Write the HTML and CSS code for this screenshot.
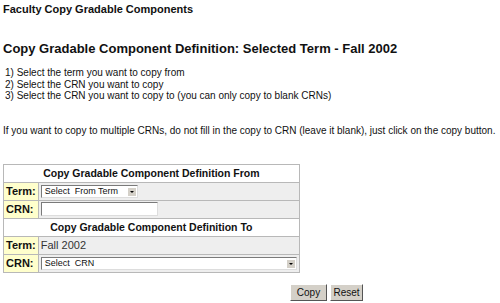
FILE: index.html
```html
<!DOCTYPE html>
<html lang="en">
<head>
    <meta charset="UTF-8">
    <title>Faculty Copy Gradable Components</title>
    <link rel="stylesheet" href="styles.css">
</head>
<body>
    <div class="page-title">Faculty Copy Gradable Components</div>

    <h2 class="section-title">Copy Gradable Component Definition: Selected Term - Fall 2002</h2>

    <div class="steps">
        1) Select the term you want to copy from<br>
        2) Select the CRN you want to copy<br>
        3) Select the CRN you want to copy to (you can only copy to blank CRNs)
    </div>

    <p class="note">If you want to copy to multiple CRNs, do not fill in the copy to CRN (leave it blank), just click on the copy button.</p>

    <table class="copy-table">
        <tr>
            <th colspan="2">Copy Gradable Component Definition From</th>
        </tr>
        <tr>
            <td class="label">Term:</td>
            <td class="field">
                <div class="select select-term">Select&nbsp; From Term<span class="arrow"></span></div>
            </td>
        </tr>
        <tr>
            <td class="label">CRN:</td>
            <td class="field"><div class="text-input"></div></td>
        </tr>
        <tr>
            <th colspan="2">Copy Gradable Component Definition To</th>
        </tr>
        <tr>
            <td class="label">Term:</td>
            <td class="field value">Fall 2002</td>
        </tr>
        <tr>
            <td class="label">CRN:</td>
            <td class="field">
                <div class="select select-crn">Select&nbsp; CRN<span class="arrow"></span></div>
            </td>
        </tr>
    </table>

    <div class="buttons">
        <span class="btn btn-copy">Copy</span>
        <span class="btn btn-reset">Reset</span>
    </div>
</body>
</html>
```

FILE: styles.css
```css
body {
    margin: 0;
    padding: 2px 3px;
    font-family: "Liberation Sans", Arial, sans-serif;
    font-size: 10px;
    color: #111111;
    background: #ffffff;
}
.page-title {
    font-size: 11px;
    font-weight: bold;
    margin-top: 1px;
}
.section-title {
    font-size: 13px;
    font-weight: bold;
    margin: 26px 0 0 0;
}
.steps {
    margin-top: 11px;
    margin-left: 2px;
    line-height: 11.5px;
}
.note {
    margin: 23px 0 0 0;
    line-height: 12px;
}
.copy-table {
    margin-top: 27px;
    width: 294px;
    border-collapse: collapse;
    border: 1px solid #9a9a9a;
    font-size: 11px;
}
.copy-table th,
.copy-table td {
    border: 1px solid #b8b8b8;
    padding: 0 2px;
    height: 17px;
}
.copy-table th {
    background: #ffffff;
    font-weight: bold;
    font-size: 10.5px;
    text-align: center;
}
.label {
    background: #ffffcc;
    font-weight: bold;
    width: 28px;
    white-space: nowrap;
}
.field {
    background: #eeeeee;
}
.value {
    color: #333333;
}
.select {
    position: relative;
    box-sizing: border-box;
    height: 13px;
    border: 1px solid #7a7a7a;
    border-right-color: #dddddd;
    border-bottom-color: #dddddd;
    background: #ffffff;
    font-size: 9px;
    line-height: 11px;
    padding-left: 3px;
}
.select-term {
    width: 97px;
}
.select-crn {
    width: 256px;
}
.arrow {
    position: absolute;
    right: 1px;
    top: 1px;
    width: 9px;
    height: 9px;
    background: #d4d0c8;
    border-top: 1px solid #ffffff;
    border-left: 1px solid #ffffff;
    box-sizing: border-box;
}
.arrow::after {
    content: "";
    position: absolute;
    left: 2px;
    top: 3px;
    border-left: 2px solid transparent;
    border-right: 2px solid transparent;
    border-top: 2px solid #000000;
}
.text-input {
    box-sizing: border-box;
    width: 117px;
    height: 14px;
    border: 1px solid #7a7a7a;
    border-right-color: #dddddd;
    border-bottom-color: #dddddd;
    background: #ffffff;
}
.buttons {
    margin-top: 11px;
    padding-left: 287px;
    display: flex;
    gap: 3px;
}
.btn {
    display: inline-block;
    box-sizing: border-box;
    height: 17px;
    line-height: 15px;
    font-size: 10px;
    text-align: center;
    background: #d4d0c8;
    border: 1px solid #ffffff;
    border-right-color: #555555;
    border-bottom-color: #555555;
}
.btn-copy {
    width: 37px;
}
.btn-reset {
    width: 33px;
}
```
